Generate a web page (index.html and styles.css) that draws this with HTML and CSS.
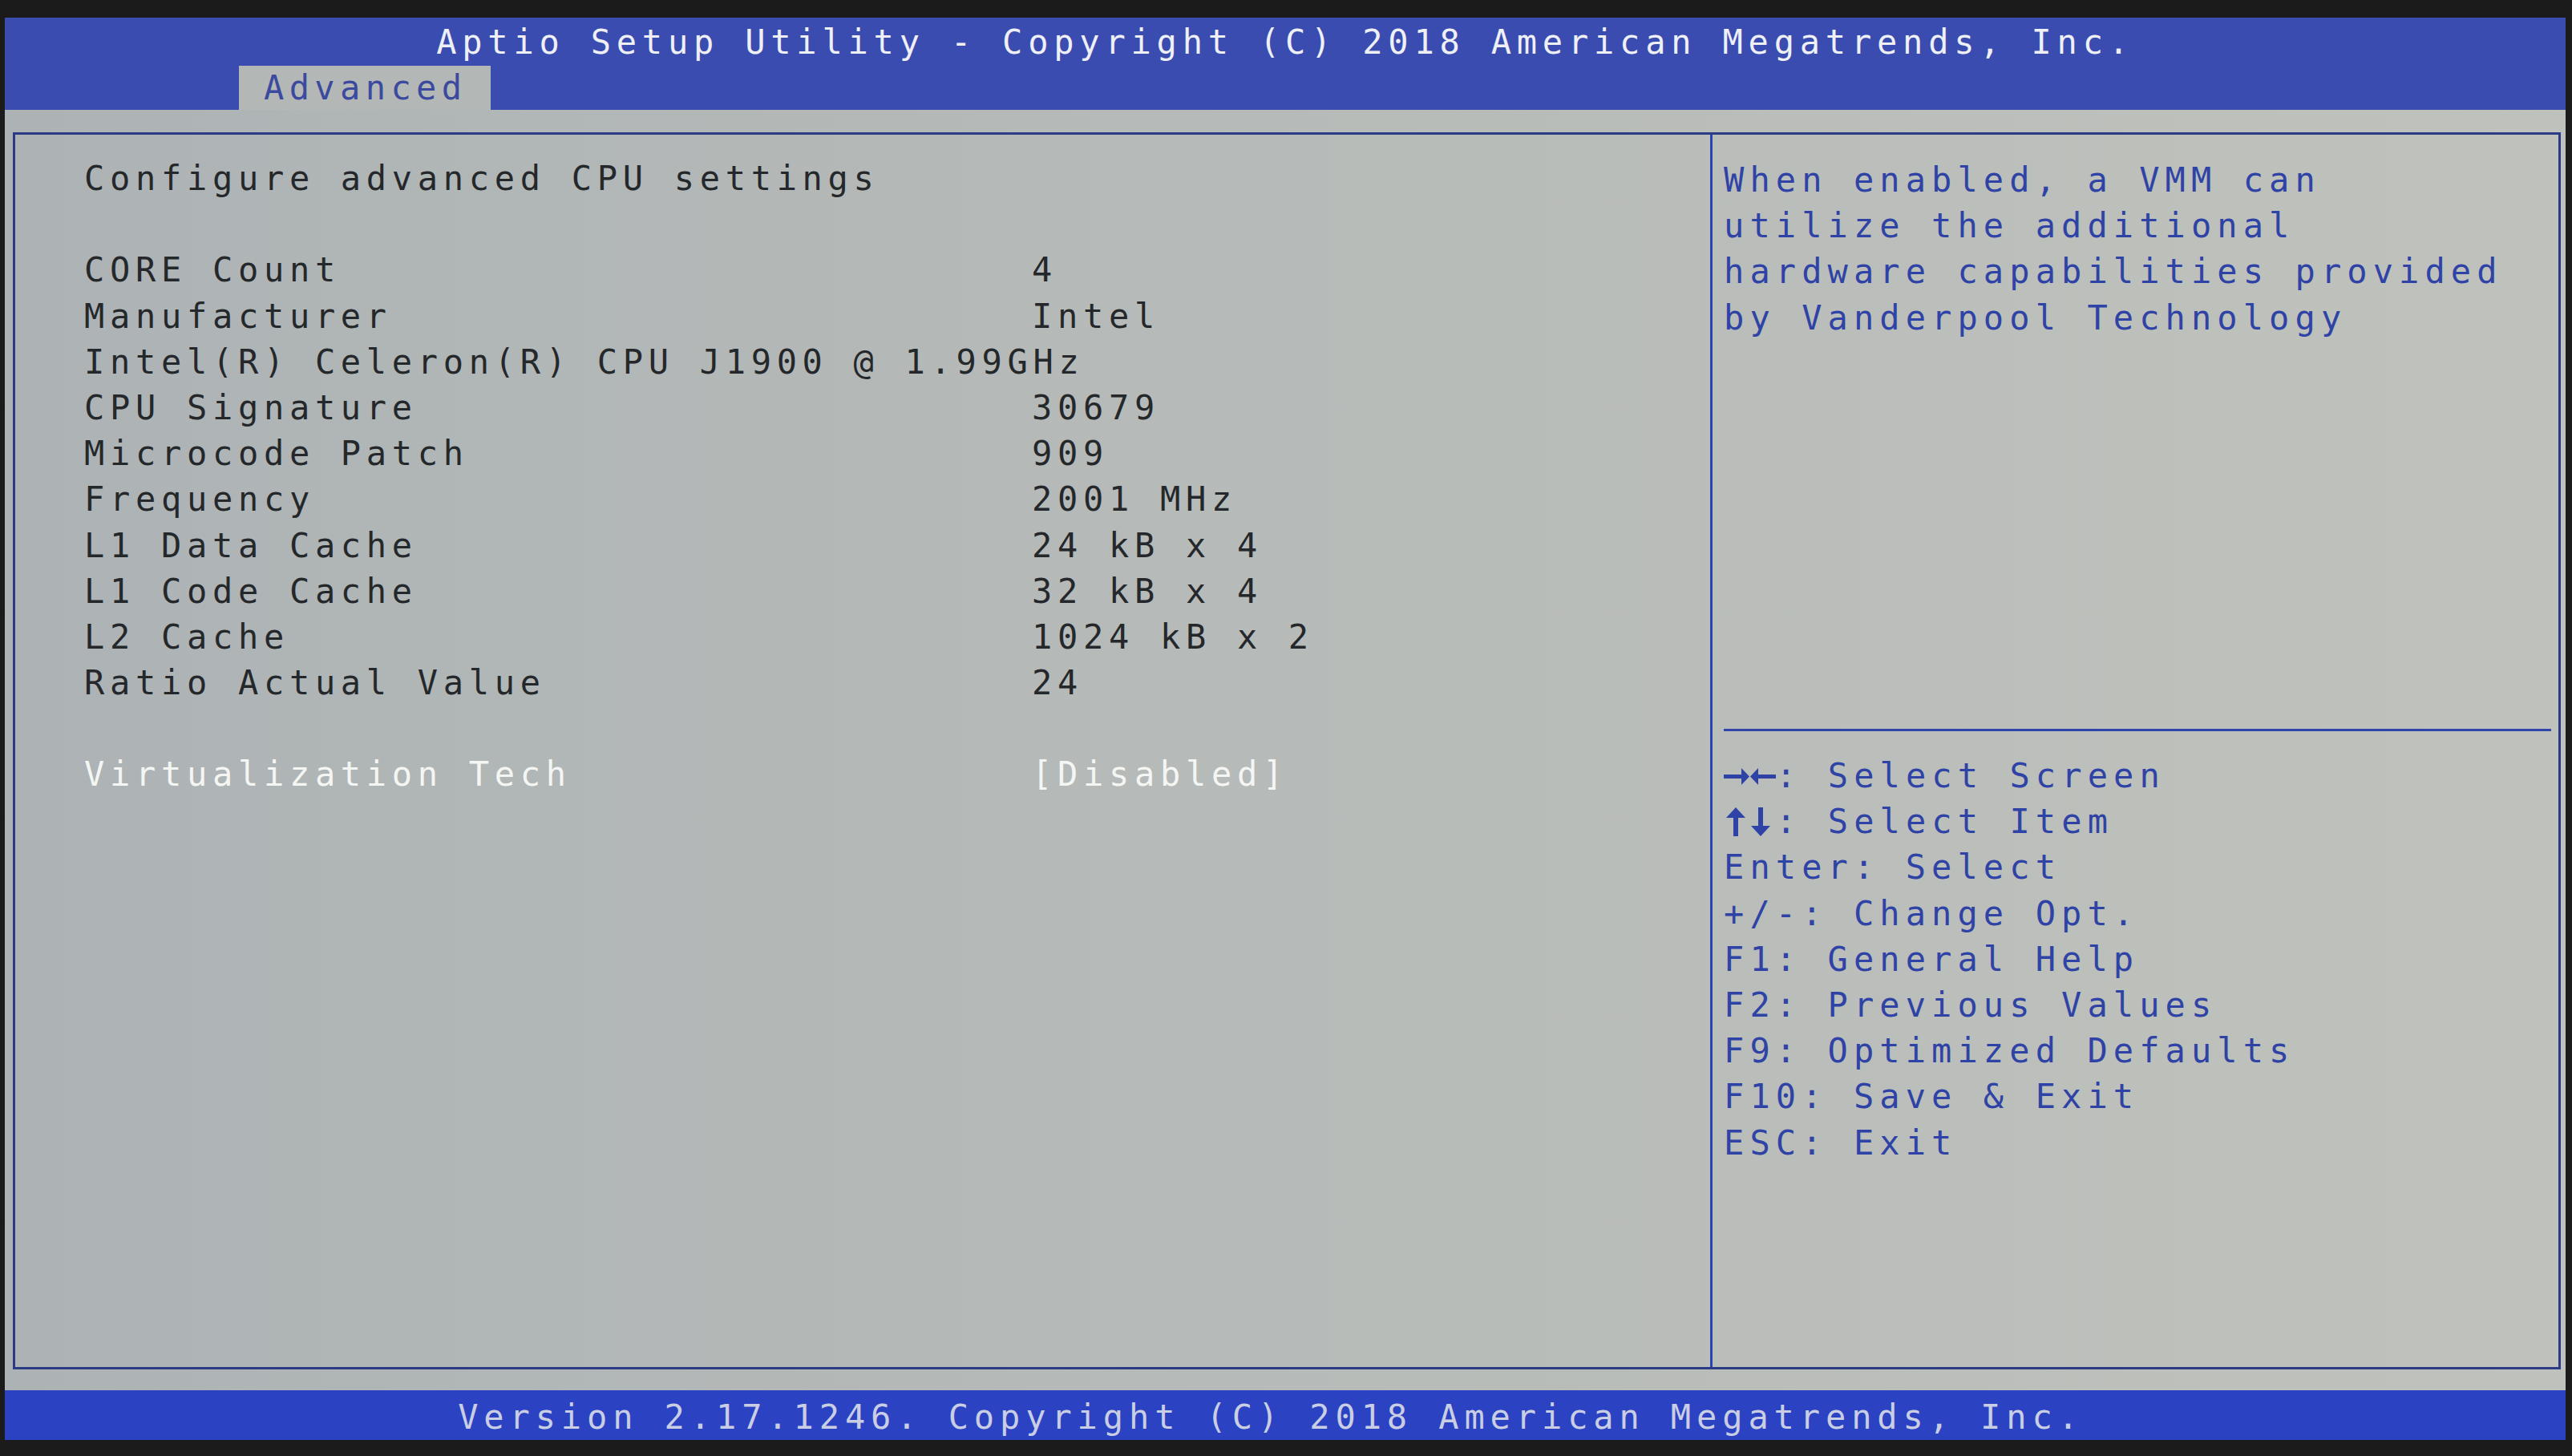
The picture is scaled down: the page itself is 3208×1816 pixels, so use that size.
FILE: index.html
```html
<!DOCTYPE html>
<html>
<head>
    <title>Aptio Setup Utility</title>
    <link rel="stylesheet" href="styles.css">
</head>
<body>
<div class="screen">
    <div class="header">
        <div class="title">Aptio Setup Utility - Copyright (C) 2018 American Megatrends, Inc.</div>
        <div class="tabs"><span class="tab">Advanced</span></div>
    </div>

    <div class="frame">
        <div class="main">
            <div class="row">Configure advanced CPU settings</div>
            <div class="row"></div>
            <div class="row"><span class="label">CORE Count</span><span class="value">4</span></div>
            <div class="row"><span class="label">Manufacturer</span><span class="value">Intel</span></div>
            <div class="row">Intel(R) Celeron(R) CPU J1900 @ 1.99GHz</div>
            <div class="row"><span class="label">CPU Signature</span><span class="value">30679</span></div>
            <div class="row"><span class="label">Microcode Patch</span><span class="value">909</span></div>
            <div class="row"><span class="label">Frequency</span><span class="value">2001 MHz</span></div>
            <div class="row"><span class="label">L1 Data Cache</span><span class="value">24 kB x 4</span></div>
            <div class="row"><span class="label">L1 Code Cache</span><span class="value">32 kB x 4</span></div>
            <div class="row"><span class="label">L2 Cache</span><span class="value">1024 kB x 2</span></div>
            <div class="row"><span class="label">Ratio Actual Value</span><span class="value">24</span></div>
            <div class="row"></div>
            <div class="row selected"><span class="label">Virtualization Tech</span><span class="value">[Disabled]</span></div>
        </div>

        <div class="side">
            <div class="help">
                <div class="line">When enabled, a VMM can</div>
                <div class="line">utilize the additional</div>
                <div class="line">hardware capabilities provided</div>
                <div class="line">by Vanderpool Technology</div>
            </div>
            <div class="keys">
                <div class="line"><svg class="arrows" width="65" height="36" viewBox="0 0 65 36">
                    <rect x="0" y="16" width="27" height="5"/>
                    <polygon points="22,8 32,18.5 22,29"/>
                    <rect x="38" y="16" width="27" height="5"/>
                    <polygon points="43,8 33,18.5 43,29"/>
                </svg>: Select Screen</div>
                <div class="line"><svg class="arrows" width="65" height="36" viewBox="0 0 65 36">
                    <polygon points="3,13 15,0 27,13"/>
                    <rect x="12" y="11" width="6" height="25"/>
                    <rect x="43" y="0" width="6" height="25"/>
                    <polygon points="34,23 46,36 58,23"/>
                </svg>: Select Item</div>
                <div class="line">Enter: Select</div>
                <div class="line">+/-: Change Opt.</div>
                <div class="line">F1: General Help</div>
                <div class="line">F2: Previous Values</div>
                <div class="line">F9: Optimized Defaults</div>
                <div class="line">F10: Save &amp; Exit</div>
                <div class="line">ESC: Exit</div>
            </div>
        </div>
    </div>

    <div class="footer">Version 2.17.1246. Copyright (C) 2018 American Megatrends, Inc.</div>
</div>
</body>
</html>
```

FILE: styles.css
```css
body {
    margin: 0;
    width: 3208px; height: 1816px; overflow: hidden;
    background: #1b1b1c;
    font-family: "DejaVu Sans Mono", "Liberation Mono", monospace;
    font-size: 42px;
    letter-spacing: 6.7px;
}
.screen {
    margin: 22px 8px 0 6px; height: 1774px;
    display: flex; flex-direction: column;
    background: linear-gradient(90deg, #adb3b5, #b6bab8 45%, #bfc2bc);
}

/* top bar */
.header {
    height: 115px; flex: none;
    display: flex; flex-direction: column;
    background: #3a4caf;
    color: #eef0f6;
}
.title {
    padding-top: 2px; line-height: 57px;
    text-align: center; letter-spacing: 6.8px;
}
.tabs { margin-top: auto; padding-left: 292px; }
.tab {
    display: inline-block; height: 55px; line-height: 55px;
    padding: 0 29px 0 31px;
    background: #b3b8b6; color: #3b4a9e;
    letter-spacing: 6.4px;
}

/* main frame */
.frame {
    display: flex; flex: none;
    height: 1537px;
    margin: 28px 6px 0 10px;
    border: 3px solid #2c3c84;
}
.main {
    width: 2028px; flex: none;
    padding: 26px 0 0 86px;
    border-right: 3px solid #2c43b2;
    color: #25282b;
}
.row { height: 57.2px; line-height: 57.2px; white-space: pre; }
.label { display: inline-block; width: 1182px; }
.selected { color: #f4f6f4; }

.side {
    flex: 1; padding: 28px 9px 0 14px;
    display: flex; flex-direction: column;
    color: #2f43a6; letter-spacing: 7.1px;
}
.line { height: 57.2px; line-height: 57.2px; white-space: pre; }
.help { height: 713px; }
.keys { border-top: 3px solid #2f45aa; padding-top: 27px; }
.arrows { fill: #2f43a6; vertical-align: -4px; }

/* bottom bar */
.footer {
    margin-top: auto; height: 62px; flex: none;
    box-sizing: border-box; padding: 6px 36px 0 0;
    line-height: 56px; text-align: center;
    background: #2b43c2; color: #c9cee4;
    letter-spacing: 6.9px;
}
```
